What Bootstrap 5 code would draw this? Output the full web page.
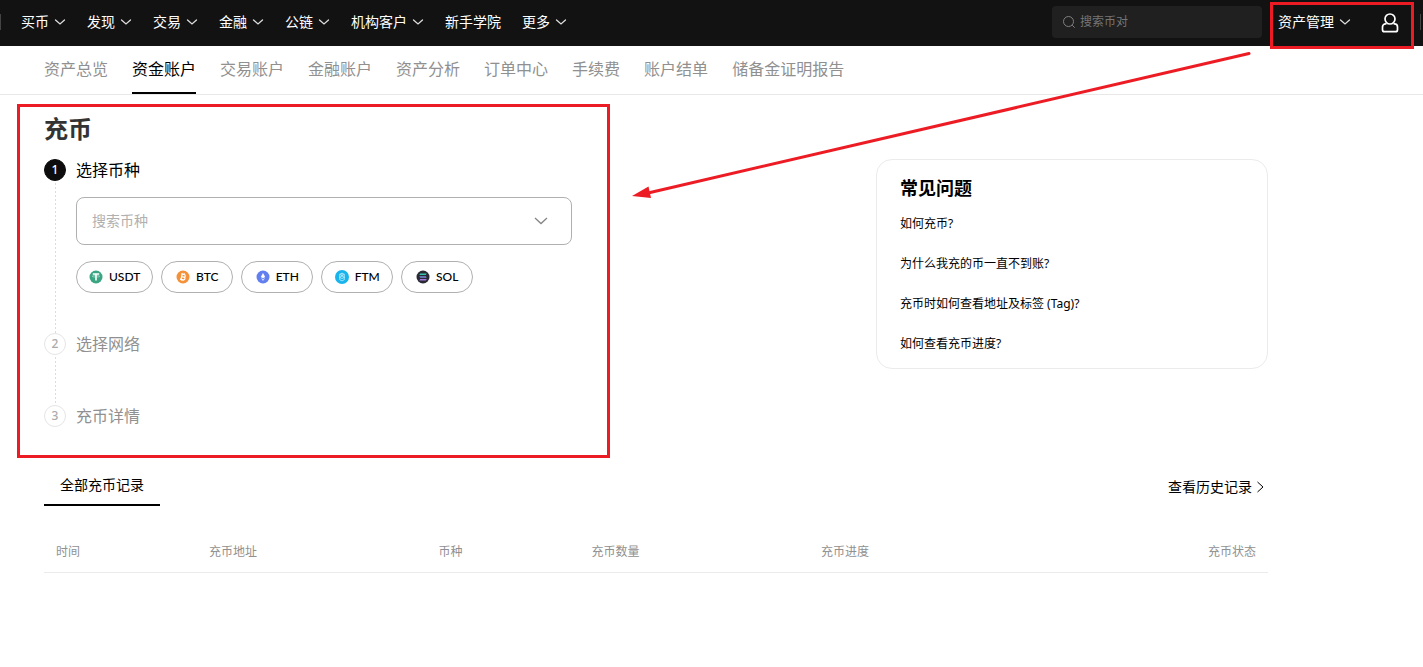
<!DOCTYPE html>
<html lang="zh-CN">
<head>
<meta charset="utf-8">
<meta name="viewport" content="width=device-width, initial-scale=1">
<title>充币</title>
<link href="https://cdn.jsdelivr.net/npm/bootstrap@5.3.0/dist/css/bootstrap.min.css" rel="stylesheet">
<style>
  :root { --red: #ed1c24; --muted: #909090; --hair: #ebebeb; --edge: #b0b0b0; }
  body { font-family: "Noto Sans", "Noto Sans CJK SC", sans-serif; font-size: 14px; line-height: 20px; color: #000; background: #fff; min-height: 100vh; }
  a { color: inherit; text-decoration: none; }
  svg { flex: none; }
  .stroke { fill: none; stroke: currentColor; }

  .topbar { background: #121212; color: #fff; height: 46px; padding-left: 21px; }
  .topbar::before, .topbar::after { content: ""; position: absolute; top: 14px; width: 1px; height: 16px; background: #444; }
  .topbar::before { left: 0; }
  .topbar::after { right: 2px; }
  .main-menu { gap: 20px; }
  .menu-link { gap: 5px; padding: 0 1px 2px 0; white-space: nowrap; }
  .menu-link svg { color: #ddd; }
  .pair-search { width: 210px; height: 32px; margin-bottom: 2px; padding: 0 10px; gap: 4px; border-radius: 4px; background: #202020; color: #808080; }
  .pair-search input { font-size: 12px; color: #fff; }
  .pair-search input::placeholder { color: #757575; }
  .bare-input { border: 0; outline: 0; background: none; padding: 0; min-width: 0; flex: 1; }
  .account { width: 144px; height: 47px; margin: 2px 9px 0 8px; border: 3px solid var(--red); padding: 0 12px 0 5px; z-index: 3; }
  .account .menu-link { padding-bottom: 7px; }
  .icon-btn { border: 0; background: none; padding: 0 0 6px; color: inherit; line-height: 1; }

  .subnav { border-bottom: 1px solid #e8e8e8; padding: 0 44px; gap: 24px; font-size: 16px; line-height: 24px; color: var(--muted); }
  .subnav a { padding: 11px 0; border-bottom: 2px solid transparent; white-space: nowrap; }
  .subnav a.active { color: #000; border-color: #000; }

  .page { max-width: 1268px; }
  .deposit { width: 593px; margin: 9px 0 0 17px; border: 3px solid var(--red); padding: 6px 35px 28px 24px; }
  .deposit h1 { font-size: 24px; line-height: 32px; font-weight: 700; color: #333; margin: 0 0 14px; }
  .step { gap: 10px; }
  .rail { width: 22px; gap: 2px; }
  .rail::after { content: ""; flex: 1; width: 1px; background: repeating-linear-gradient(#dcdcdc 0 2px, transparent 2px 4px); }
  .step:last-child .rail::after { display: none; }
  .dot { width: 22px; height: 22px; border: 1px solid #e5e5e5; border-radius: 50%; font-size: 12px; font-weight: 500; color: #aaa; }
  .step.current .dot { background: #0d0d0d; border-color: #0d0d0d; color: #fff; }
  .step h2 { font-size: 16px; line-height: 22px; font-weight: 400; color: var(--muted); margin: 0; }
  .step.current h2 { color: #000; margin-bottom: 16px; }
  .step.current { min-height: 174px; }
  .step.pending { min-height: 72px; }
  .coin-box { height: 48px; border: 1px solid var(--edge); border-radius: 8px; padding: 0 22px 0 15px; margin-bottom: 16px; color: #858585; }
  .coin-box input::placeholder { color: #b0b0b0; }
  .coin { min-width: 72px; height: 32px; padding: 0 12px; gap: 6px; border: 1px solid var(--edge); border-radius: 16px; background: #fff; font-family: Lato, "Noto Sans", sans-serif; font-size: 12px; font-weight: 500; color: #000; }

  .faq { width: 392px; margin-top: 64px; padding: 16px 23px 14px; border: 1px solid var(--hair); border-radius: 16px; font-size: 12px; }
  .faq h2 { font-size: 18px; line-height: 24px; font-weight: 700; margin: 0 0 14px; }
  .faq ul { gap: 20px; }

  .records { padding: 18px 0 0 44px; }
  .record-tab { width: 116px; height: 30px; padding: 0 16px 10px; border: 0; border-bottom: 2px solid #000; background: none; color: #000; line-height: 18px; }
  .history { gap: 3px; margin-right: 3px; padding-top: 1px; }
  .record-table { table-layout: fixed; margin: 25px 0 0; font-size: 12px; }
  .record-table th { font-weight: 400; color: var(--muted); padding: 11px 12px 10px; border-bottom: 1px solid var(--hair); background: none; }
  .w-narrow { width: 12.5%; }
  .w-wide { width: 18.75%; }

  /* Callout arrow lies over the header strip and the page */
  .callout { position: absolute; left: 630px; top: 48px; z-index: 4; pointer-events: none; }
</style>
</head>
<body class="position-relative">
<svg class="d-none">
  <symbol id="caret" viewBox="0 0 12 12"><path class="stroke" stroke-width="1.3" stroke-linecap="round" d="M1.5 4 6 8 10.500 4"/></symbol>
</svg>

<header class="topbar position-relative d-flex align-items-center">
  <nav class="main-menu d-flex me-auto" aria-label="主导航">
    <a href="#" class="menu-link d-flex align-items-center">买币<svg width="12" height="12"><use href="#caret"/></svg></a>
    <a href="#" class="menu-link d-flex align-items-center">发现<svg width="12" height="12"><use href="#caret"/></svg></a>
    <a href="#" class="menu-link d-flex align-items-center">交易<svg width="12" height="12"><use href="#caret"/></svg></a>
    <a href="#" class="menu-link d-flex align-items-center">金融<svg width="12" height="12"><use href="#caret"/></svg></a>
    <a href="#" class="menu-link d-flex align-items-center">公链<svg width="12" height="12"><use href="#caret"/></svg></a>
    <a href="#" class="menu-link d-flex align-items-center">机构客户<svg width="12" height="12"><use href="#caret"/></svg></a>
    <a href="#" class="menu-link d-flex align-items-center">新手学院</a>
    <a href="#" class="menu-link d-flex align-items-center">更多<svg width="12" height="12"><use href="#caret"/></svg></a>
  </nav>
  <label class="pair-search d-flex align-items-center">
    <svg width="14" height="14" viewBox="0 0 14 14"><circle class="stroke" cx="6.500" cy="6.500" r="5"/><path class="stroke" d="m10.200 10.200 2.500 2.500"/></svg>
    <input class="bare-input" type="search" placeholder="搜索币对" aria-label="搜索币对">
  </label>
  <div class="account position-relative d-flex align-items-center justify-content-between align-self-start">
    <a href="#" class="menu-link d-flex align-items-center">资产管理<svg width="12" height="12"><use href="#caret"/></svg></a>
    <button class="icon-btn" type="button" aria-label="个人中心">
      <svg width="18" height="20" viewBox="0 0 18 20"><g class="stroke" stroke-width="1.700"><circle cx="9" cy="6" r="5"/><path d="M5.400 10.900h-.9A3 3 0 0 0 1.500 13.900v2.800a2 2 0 0 0 2 2h11a2 2 0 0 0 2-2v-2.800a3 3 0 0 0-3-3h-.9"/></g></svg>
    </button>
  </div>
</header>

<nav class="subnav d-flex" aria-label="资产">
  <a href="#">资产总览</a>
  <a href="#" class="active" aria-current="page">资金账户</a>
  <a href="#">交易账户</a>
  <a href="#">金融账户</a>
  <a href="#">资产分析</a>
  <a href="#">订单中心</a>
  <a href="#">手续费</a>
  <a href="#">账户结单</a>
  <a href="#">储备金证明报告</a>
</nav>

<main class="page">
  <div class="d-flex justify-content-between align-items-start">
    <section class="deposit">
      <h1>充币</h1>
      <div class="step current d-flex">
        <div class="rail d-flex flex-column align-items-center"><span class="dot d-flex align-items-center justify-content-center">1</span></div>
        <div class="flex-grow-1">
          <h2>选择币种</h2>
          <label class="coin-box d-flex align-items-center">
            <input class="bare-input" type="text" placeholder="搜索币种" aria-label="搜索币种">
            <svg width="16" height="16" viewBox="0 0 16 16"><path class="stroke" stroke-width="1.300" d="m2 5 6 5.500L14 5"/></svg>
          </label>
          <div class="d-flex gap-2">
            <button type="button" class="coin d-flex align-items-center justify-content-center">
              <svg width="14" height="14" viewBox="0 0 14 14"><circle cx="7" cy="7" r="6.500" fill="#3aa583"/><path d="M3.800 3.300h6.400v1.500H7.800v5.700H6.200V4.800H3.800z" fill="#fff"/><ellipse cx="7" cy="6.300" rx="3.800" ry=".8" fill="none" stroke="#fff" stroke-width=".4"/></svg>USDT</button>
            <button type="button" class="coin d-flex align-items-center justify-content-center">
              <svg width="14" height="14" viewBox="0 0 14 14"><circle cx="7" cy="7" r="6.500" fill="#f3923b"/><g transform="rotate(12 7 7)" fill="none" stroke="#fff"><path stroke-width="1.200" d="M4.500 4.300h3.200a1.300 1.300 0 0 1 0 2.600H5.700h2.200a1.400 1.400 0 0 1 0 2.800H4.500M5.600 4.300v5.400"/><path stroke-width=".8" d="M6.200 3v1.200M7.700 3v1.200M6.200 9.800V11M7.700 9.800V11"/></g></svg>BTC</button>
            <button type="button" class="coin d-flex align-items-center justify-content-center">
              <svg width="14" height="14" viewBox="0 0 14 14"><circle cx="7" cy="7" r="6.500" fill="#627ff0"/><path d="m7 3 2.200 3.900L7 8.300 4.800 6.900z" fill="#fff"/><path d="M4.900 7.800 7 9.200l2.100-1.400L7 11z" fill="#dfe5ff"/></svg>ETH</button>
            <button type="button" class="coin d-flex align-items-center justify-content-center">
              <svg width="14" height="14" viewBox="0 0 14 14"><circle cx="7" cy="7" r="7" fill="#18b4ec"/><path d="m4.700 4.300 2.300-1.200 2.300 1.200v5.400L7 10.900 4.700 9.700zM4.700 4.300 7 5.600l2.300-1.300M4.700 7.300 7 6l2.300 1.300L7 8.600zM7 3.100v2.500" fill="none" stroke="#d8f3ff" stroke-width=".7"/></svg>FTM</button>
            <button type="button" class="coin d-flex align-items-center justify-content-center">
              <svg width="14" height="14" viewBox="0 0 14 14"><circle cx="7" cy="7" r="6.500" fill="#2a2a35"/><path d="M4.200 3.500h6.500l-.9 1.500H3.300z" fill="#35c6b0"/><path d="M3.300 6.200h6.500l.9 1.500H4.200z" fill="#7a8fd8"/><path d="M4.200 8.900h6.500l-.9 1.500H3.300z" fill="#a878e0"/></svg>SOL</button>
          </div>
        </div>
      </div>
      <div class="step pending d-flex">
        <div class="rail d-flex flex-column align-items-center"><span class="dot d-flex align-items-center justify-content-center">2</span></div>
        <h2>选择网络</h2>
      </div>
      <div class="step d-flex">
        <div class="rail d-flex flex-column align-items-center"><span class="dot d-flex align-items-center justify-content-center">3</span></div>
        <h2>充币详情</h2>
      </div>
    </section>

    <aside class="faq">
      <h2>常见问题</h2>
      <ul class="list-unstyled d-flex flex-column mb-0">
        <li><a href="#">如何充币?</a></li>
        <li><a href="#">为什么我充的币一直不到账?</a></li>
        <li><a href="#">充币时如何查看地址及标签 (Tag)?</a></li>
        <li><a href="#">如何查看充币进度?</a></li>
      </ul>
    </aside>
  </div>

  <section class="records">
    <div class="d-flex justify-content-between align-items-start">
      <button type="button" class="record-tab">全部充币记录</button>
      <a href="#" class="history d-flex align-items-center">查看历史记录<svg width="10" height="14" viewBox="0 0 10 14"><path class="stroke" d="m2.500 2 5.500 5-5.500 5"/></svg></a>
    </div>
    <table class="record-table table">
      <thead>
        <tr>
          <th scope="col" class="w-narrow">时间</th>
          <th scope="col" class="w-wide">充币地址</th>
          <th scope="col" class="w-narrow">币种</th>
          <th scope="col" class="w-wide">充币数量</th>
          <th scope="col" class="w-wide">充币进度</th>
          <th scope="col" class="w-wide text-end">充币状态</th>
        </tr>
      </thead>
    </table>
  </section>
</main>

<svg class="callout" width="624" height="156" viewBox="0 0 624 156" aria-hidden="true">
  <path d="M619 5.500 18 145" fill="none" stroke="#ed1c24" stroke-width="3" stroke-linecap="round"/>
  <path d="m2 148 16.500-9.500 2.500 11.500z" fill="#ed1c24"/>
</svg>
<script src="https://cdn.jsdelivr.net/npm/bootstrap@5.3.0/dist/js/bootstrap.bundle.min.js"></script>
</body>
</html>
